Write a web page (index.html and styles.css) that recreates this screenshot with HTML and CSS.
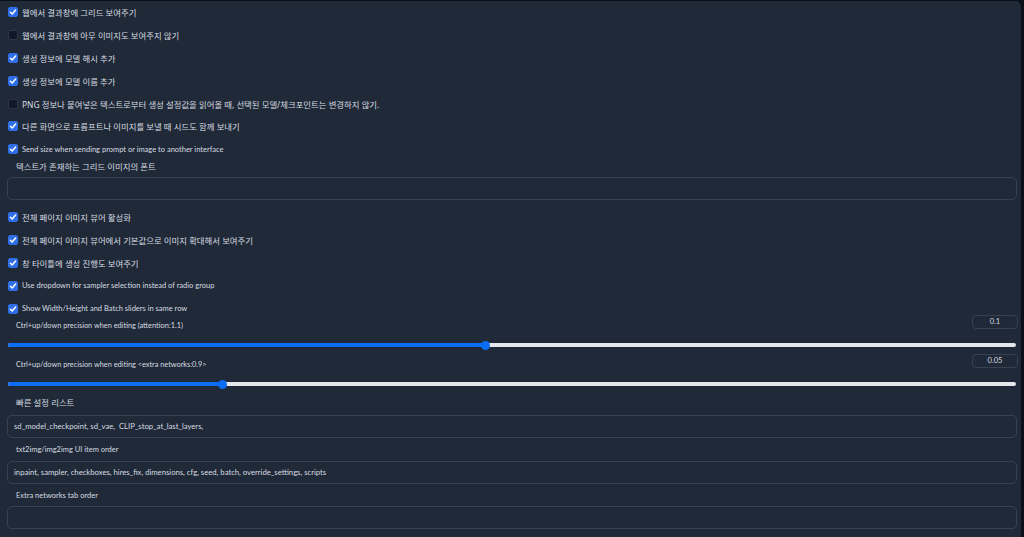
FILE: index.html
```html
<!DOCTYPE html>
<html lang="ko">
<head>
    <meta charset="UTF-8">
    <meta name="viewport" content="width=device-width, initial-scale=1.0">
    <title>Settings</title>
    <link rel="stylesheet" href="styles.css">
</head>
<body>
    <div class="panel">
        <div class="checks">
            <label class="check ko"><span class="box on"><svg viewBox="0 0 10 10"><path d="M2.4 5.3 L4.2 7 L7.6 3.1"/></svg></span>웹에서 결과창에 그리드 보여주기</label>
            <label class="check ko"><span class="box"></span>웹에서 결과창에 아무 이미지도 보여주지 않기</label>
            <label class="check ko"><span class="box on"><svg viewBox="0 0 10 10"><path d="M2.4 5.3 L4.2 7 L7.6 3.1"/></svg></span>생성 정보에 모델 해시 추가</label>
            <label class="check ko"><span class="box on"><svg viewBox="0 0 10 10"><path d="M2.4 5.3 L4.2 7 L7.6 3.1"/></svg></span>생성 정보에 모델 이름 추가</label>
            <label class="check ko"><span class="box"></span>PNG 정보나 붙여넣은 텍스트로부터 생성 설정값을 읽어올 때, 선택된 모델/체크포인트는 변경하지 않기.</label>
            <label class="check ko"><span class="box on"><svg viewBox="0 0 10 10"><path d="M2.4 5.3 L4.2 7 L7.6 3.1"/></svg></span>다른 화면으로 프롬프트나 이미지를 보낼 때 시드도 함께 보내기</label>
            <label class="check"><span class="box on"><svg viewBox="0 0 10 10"><path d="M2.4 5.3 L4.2 7 L7.6 3.1"/></svg></span>Send size when sending prompt or image to another interface</label>
        </div>

        <div class="field-label ko">텍스트가 존재하는 그리드 이미지의 폰트</div>
        <div class="text-input"></div>

        <div class="checks second">
            <label class="check ko"><span class="box on"><svg viewBox="0 0 10 10"><path d="M2.4 5.3 L4.2 7 L7.6 3.1"/></svg></span>전체 페이지 이미지 뷰어 활성화</label>
            <label class="check ko"><span class="box on"><svg viewBox="0 0 10 10"><path d="M2.4 5.3 L4.2 7 L7.6 3.1"/></svg></span>전체 페이지 이미지 뷰어에서 기본값으로 이미지 확대해서 보여주기</label>
            <label class="check ko"><span class="box on"><svg viewBox="0 0 10 10"><path d="M2.4 5.3 L4.2 7 L7.6 3.1"/></svg></span>창 타이틀에 생성 진행도 보여주기</label>
            <label class="check"><span class="box on"><svg viewBox="0 0 10 10"><path d="M2.4 5.3 L4.2 7 L7.6 3.1"/></svg></span>Use dropdown for sampler selection instead of radio group</label>
            <label class="check"><span class="box on"><svg viewBox="0 0 10 10"><path d="M2.4 5.3 L4.2 7 L7.6 3.1"/></svg></span>Show Width/Height and Batch sliders in same row</label>
        </div>

        <div class="slider-block first">
            <div class="slider-head">
                <span class="slider-label">Ctrl+up/down precision when editing (attention:1.1)</span>
                <span class="num">0.1</span>
            </div>
            <div class="slider">
                <div class="fill" style="width: 47.4%"><span class="thumb"></span></div>
            </div>
        </div>

        <div class="slider-block">
            <div class="slider-head">
                <span class="slider-label">Ctrl+up/down precision when editing &lt;extra networks:0.9&gt;</span>
                <span class="num">0.05</span>
            </div>
            <div class="slider">
                <div class="fill" style="width: 21.3%"><span class="thumb"></span></div>
            </div>
        </div>

        <div class="field-label ko quick">빠른 설정 리스트</div>
        <div class="text-input">sd_model_checkpoint, sd_vae,&nbsp; CLIP_stop_at_last_layers,</div>

        <div class="field-label">txt2img/img2img UI item order</div>
        <div class="text-input">inpaint, sampler, checkboxes, hires_fix, dimensions, cfg, seed, batch, override_settings, scripts</div>

        <div class="field-label">Extra networks tab order</div>
        <div class="text-input"></div>
    </div>
</body>
</html>
```

FILE: styles.css
```css
body {
    margin: 0;
    background-color: #0b0f19;
    font-family: Lato, "Noto Sans CJK KR", sans-serif;
    font-size: 7.5px;
    color: #d8dce2;
    height: 537px;
    overflow: hidden;
}
.ko {
    font-family: "Noto Sans", "Noto Sans CJK KR", sans-serif;
    font-size: 8.4px;
}
.panel {
    margin: 1px 3px 0 0;
    height: 536px;
    background-color: #1f2937;
    border-radius: 0 6px 0 0;
    padding: 0 3px 0 7px;
    box-sizing: border-box;
}
.checks {
    display: flex;
    flex-direction: column;
}
.checks.second {
    margin-top: 5.5px;
}
.check {
    display: flex;
    align-items: center;
    height: 22.8px;
    gap: 4px;
    padding-left: 1px;
}
.box {
    width: 10px;
    height: 10px;
    border-radius: 2px;
    background-color: #111827;
    border: 1px solid #2d3644;
    box-sizing: border-box;
    flex-shrink: 0;
    display: flex;
}
.box.on {
    background-color: #2f6ee6;
    border-color: #2f6ee6;
}
.box svg {
    width: 10px;
    height: 10px;
    margin: -1px;
}
.box path {
    fill: none;
    stroke: #fff;
    stroke-width: 1.5;
    stroke-linecap: round;
    stroke-linejoin: round;
}
.field-label {
    height: 12px;
    line-height: 12px;
    padding-left: 9px;
    margin-bottom: 4.5px;
}
.field-label.quick {
    margin-top: 5px;
    margin-bottom: 6px;
}
.text-input {
    height: 23px;
    border: 1px solid #374151;
    border-radius: 5px;
    box-sizing: border-box;
    padding: 0 6px;
    line-height: 21px;
    font-size: 7.7px;
    margin: 0 1px 6px 0;
}
.slider-block {
    height: 39px;
    margin-top: -6px;
}
.slider-block + .slider-block {
    margin-top: 0;
}
.slider-head {
    display: flex;
    justify-content: space-between;
    align-items: flex-end;
    height: 16px;
    padding-left: 9px;
}
.slider-label {
    line-height: 12px;
    font-size: 7.35px;
    margin-bottom: -2px;
}
.num {
    width: 46px;
    height: 14px;
    border: 1px solid #374151;
    border-radius: 4px;
    box-sizing: border-box;
    text-align: center;
    line-height: 12px;
    margin-bottom: 1px;
}
.slider {
    height: 4px;
    margin: 13px 2px 0 1px;
    background-color: #e5e7eb;
    border-radius: 2px;
}
.fill {
    height: 100%;
    background-color: #0b6cf5;
    border-radius: 2px;
    position: relative;
}
.thumb {
    position: absolute;
    right: -4.5px;
    top: -2.5px;
    width: 9px;
    height: 9px;
    border-radius: 50%;
    background-color: #0b6cf5;
}
```
